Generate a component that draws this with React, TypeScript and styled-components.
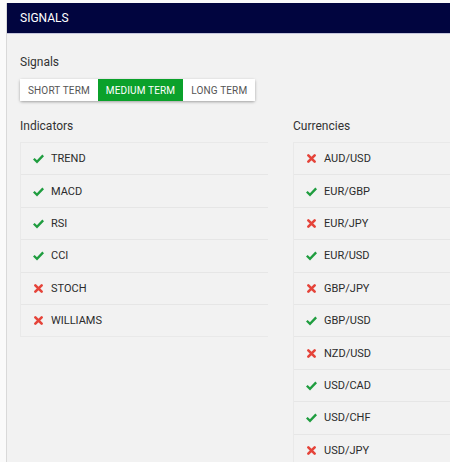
import React, { useState } from 'react';
import styled, { createGlobalStyle } from 'styled-components';

const GlobalStyle = createGlobalStyle`
  html, body {
    margin: 0;
    padding: 0;
    background: #fafafa;
    font-family: Roboto, "Liberation Sans", Arial, sans-serif;
    overflow: hidden;
  }
`;

interface Signal {
  name: string;
  up: boolean;
}

const indicators: Signal[] = [
  { name: 'TREND', up: true },
  { name: 'MACD', up: true },
  { name: 'RSI', up: true },
  { name: 'CCI', up: true },
  { name: 'STOCH', up: false },
  { name: 'WILLIAMS', up: false },
];

const currencies: Signal[] = [
  { name: 'AUD/USD', up: false },
  { name: 'EUR/GBP', up: true },
  { name: 'EUR/JPY', up: false },
  { name: 'EUR/USD', up: true },
  { name: 'GBP/JPY', up: false },
  { name: 'GBP/USD', up: true },
  { name: 'NZD/USD', up: false },
  { name: 'USD/CAD', up: true },
  { name: 'USD/CHF', up: true },
  { name: 'USD/JPY', up: false },
];

const terms = ['SHORT TERM', 'MEDIUM TERM', 'LONG TERM'];

const Page = styled.div`
  padding: 3px 0 0 6px;
  height: 459px;
`;

const Panel = styled.div`
  border-left: 1px solid #d9d9d9;
  background: #f2f2f2;
  height: 100%;
  overflow: hidden;
`;

const Header = styled.div`
  height: 30px;
  background: #01053f;
  border-bottom: 1px solid #c5c6dc;
  color: #fff;
  font-size: 12px;
  display: flex;
  align-items: center;
  padding-left: 13px;
`;

const Body = styled.div`
  padding: 21px 13px 0 13px;
`;

const Label = styled.div`
  font-size: 12px;
  color: #333;
  line-height: 14px;
`;

const ButtonGroup = styled.div`
  display: inline-flex;
  margin-top: 10px;
  box-shadow: 0 1px 3px rgba(0, 0, 0, 0.35);
  border-radius: 2px;
`;

const TermButton = styled.button<{ $active: boolean }>`
  border: none;
  height: 22px;
  padding: 0 8px;
  font-family: inherit;
  font-size: 10px;
  letter-spacing: 0.15px;
  cursor: pointer;
  background: ${(p) => (p.$active ? '#0ba12b' : '#fff')};
  color: ${(p) => (p.$active ? '#fff' : '#555')};
`;

const Columns = styled.div`
  display: grid;
  grid-template-columns: 248px 248px;
  column-gap: 25px;
  margin-top: 18px;
`;

const List = styled.div`
  margin-top: 9px;
  border: 1px solid #e9e9e9;
  border-width: 1px 0 1px 1px;
`;

const Row = styled.div`
  display: flex;
  align-items: center;
  height: 31.4px;
  padding-left: 12px;
  font-size: 11px;
  color: #2b2b2b;
  & + & {
    border-top: 1px solid #e6e6e6;
  }
`;

const Icon = styled.svg`
  width: 11px;
  height: 11px;
  margin-right: 7px;
  flex-shrink: 0;
`;

function Check() {
  return (
    <Icon viewBox="0 0 16 16">
      <path d="M1.2 8.4 L5.8 12.8 L14.8 3.4" fill="none" stroke="#1f9d3f" strokeWidth="3.4" strokeLinejoin="miter" />
    </Icon>
  );
}

function Cross() {
  return (
    <Icon viewBox="0 0 16 16">
      <path d="M3.4 3.4 L12.6 12.6 M12.6 3.4 L3.4 12.6" fill="none" stroke="#e5443a" strokeWidth="3.8" strokeLinecap="round" />
    </Icon>
  );
}

function SignalList({ title, items }: { title: string; items: Signal[] }) {
  return (
    <div>
      <Label>{title}</Label>
      <List>
        {items.map((item) => (
          <Row key={item.name}>
            {item.up ? <Check /> : <Cross />}
            {item.name}
          </Row>
        ))}
      </List>
    </div>
  );
}

export default function App() {
  const [term, setTerm] = useState('MEDIUM TERM');

  return (
    <Page>
      <GlobalStyle />
      <Panel>
        <Header>SIGNALS</Header>
        <Body>
          <Label>Signals</Label>
          <ButtonGroup>
            {terms.map((t) => (
              <TermButton key={t} $active={t === term} onClick={() => setTerm(t)}>
                {t}
              </TermButton>
            ))}
          </ButtonGroup>
          <Columns>
            <SignalList title="Indicators" items={indicators} />
            <SignalList title="Currencies" items={currencies} />
          </Columns>
        </Body>
      </Panel>
    </Page>
  );
}
